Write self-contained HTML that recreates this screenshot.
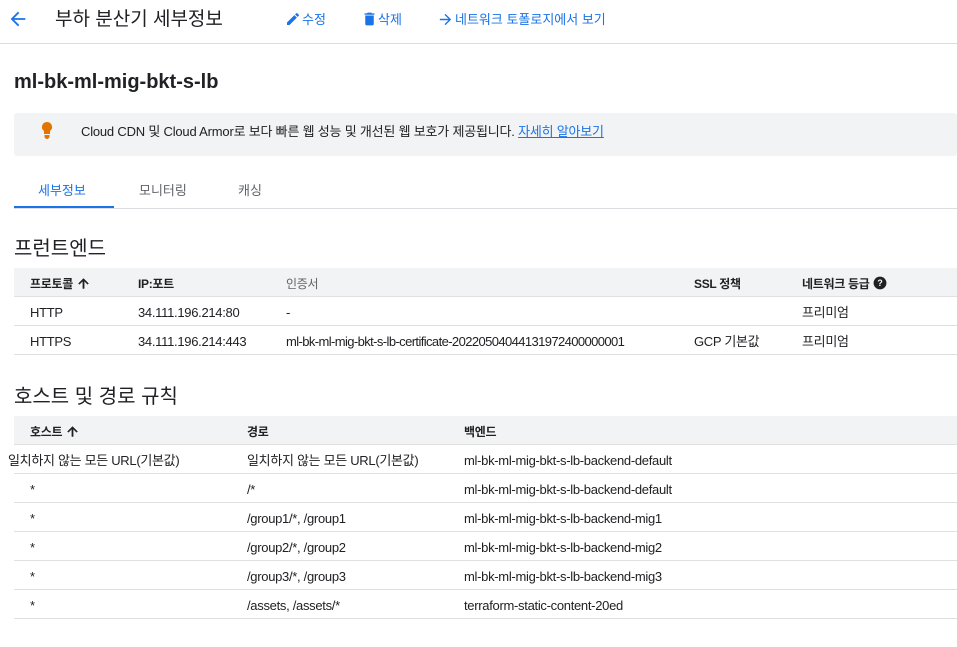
<!DOCTYPE html>
<html><head><meta charset="utf-8"><style>
*{margin:0;padding:0;box-sizing:border-box}
body{width:957px;height:647px;background:#fff;font-family:"Liberation Sans","Noto Sans CJK KR",sans-serif;color:#202124;position:relative;overflow:hidden;font-size:13px}
.a{position:absolute;white-space:nowrap}
.blue{color:#1a73e8}
.hdr{position:absolute;left:0;top:0;width:957px;height:44px;border-bottom:1px solid #dadce0}
.tbl{position:absolute;left:14px;width:943px}
.row{position:relative;height:29px;border-bottom:1px solid #e0e0e0}
.row.h{background:#f1f3f4;font-weight:bold;font-size:12px}
.row span{position:absolute;top:2px;height:28px;line-height:28px;white-space:nowrap;letter-spacing:-0.3px}
.g{color:#5f6368}
</style></head><body>
<div class="hdr"></div>
<svg class="a" style="left:7px;top:8px" width="22" height="22" viewBox="0 0 24 24"><path d="M20 11H7.8l5.6-5.6L12 4l-8 8 8 8 1.4-1.4L7.8 13H20z" fill="#1a73e8"/></svg>
<div class="a" style="left:55px;top:8px;font-size:19px;line-height:24px;color:#202124">부하 분산기 세부정보</div>
<svg class="a" style="left:285px;top:11px" width="16" height="16" viewBox="0 0 24 24"><path d="M3 17.25V21h3.75L17.8 9.94l-3.75-3.75zM20.7 7.04a1 1 0 000-1.41l-2.34-2.34a1 1 0 00-1.41 0l-1.83 1.83 3.75 3.75z" fill="#1a73e8"/></svg>
<div class="a blue" style="left:302px;top:11px;font-size:13px;line-height:18px">수정</div>
<svg class="a" style="left:361px;top:10px" width="17" height="18" viewBox="0 0 24 24"><path d="M6 19c0 1.1.9 2 2 2h8c1.1 0 2-.9 2-2V7H6zM19 4h-3.5l-1-1h-5l-1 1H5v2h14z" fill="#1a73e8"/></svg>
<div class="a blue" style="left:378px;top:11px;font-size:13px;line-height:18px">삭제</div>
<svg class="a" style="left:437px;top:11px" width="17" height="17" viewBox="0 0 24 24"><path d="M12 4l-1.4 1.4 5.6 5.6H4v2h12.2l-5.6 5.6L12 20l8-8z" fill="#1a73e8"/></svg>
<div class="a blue" style="left:455px;top:11px;font-size:13px;line-height:18px">네트워크 토폴로지에서 보기</div>

<div class="a" style="left:14px;top:70px;font-size:20px;font-weight:bold;line-height:24px">ml-bk-ml-mig-bkt-s-lb</div>

<div class="a" style="left:14px;top:113px;width:943px;height:43px;background:#f1f3f4;border-radius:3px"></div>
<svg class="a" style="left:40px;top:121px" width="14" height="18" viewBox="0 0 14 18"><path d="M7 1a5 5 0 00-3 9v3h6v-3a5 5 0 00-3-9zM4.5 14h5v1.5a2 2 0 01-5 0z" fill="#e37400"/></svg>
<div class="a" style="left:81px;top:123px;font-size:13px;line-height:18px;letter-spacing:-0.2px">Cloud CDN 및 Cloud Armor로 보다 빠른 웹 성능 및 개선된 웹 보호가 제공됩니다. <span class="blue" style="text-decoration:underline">자세히 알아보기</span></div>

<div class="a blue" style="left:38px;top:182px;font-size:13px;line-height:18px">세부정보</div>
<div class="a g" style="left:139px;top:182px;font-size:13px;line-height:18px">모니터링</div>
<div class="a g" style="left:238px;top:182px;font-size:13px;line-height:18px">캐싱</div>
<div class="a" style="left:14px;top:208px;width:943px;height:1px;background:#dadce0"></div>
<div class="a" style="left:14px;top:206px;width:100px;height:2px;background:#1a73e8"></div>

<div class="a" style="left:14px;top:236px;font-size:20px;line-height:26px">프런트엔드</div>
<div class="tbl" style="top:268px">
<div class="row h"><span style="left:16px">프로토콜 <svg width="15" height="15" viewBox="0 0 24 24" style="vertical-align:-3px"><path d="M4 12l1.4 1.4L11 7.8V20h2V7.8l5.6 5.6L20 12l-8-8z" fill="#202124" stroke="#202124" stroke-width="0.8"/></svg></span><span style="left:124px">IP:포트</span><span style="left:272px;font-weight:normal" class="g">인증서</span><span style="left:680px">SSL 정책</span><span style="left:788px">네트워크 등급 <svg width="14" height="14" viewBox="0 0 24 24" style="vertical-align:-2px"><circle cx="12" cy="12" r="11" fill="#202124"/><text x="12" y="17" font-size="15" text-anchor="middle" fill="#fff" font-weight="bold" font-family="Liberation Sans">?</text></svg></span></div>
<div class="row"><span style="left:16px">HTTP</span><span style="left:124px">34.111.196.214:80</span><span style="left:272px">-</span><span style="left:788px">프리미엄</span></div>
<div class="row"><span style="left:16px">HTTPS</span><span style="left:124px">34.111.196.214:443</span><span style="left:272px;letter-spacing:-0.6px">ml-bk-ml-mig-bkt-s-lb-certificate-20220504044131972400000001</span><span style="left:680px">GCP 기본값</span><span style="left:788px">프리미엄</span></div>
</div>

<div class="a" style="left:14px;top:384px;font-size:20px;line-height:26px">호스트 및 경로 규칙</div>
<div class="tbl" style="top:416px">
<div class="row h"><span style="left:16px">호스트 <svg width="15" height="15" viewBox="0 0 24 24" style="vertical-align:-3px"><path d="M4 12l1.4 1.4L11 7.8V20h2V7.8l5.6 5.6L20 12l-8-8z" fill="#202124" stroke="#202124" stroke-width="0.8"/></svg></span><span style="left:233px">경로</span><span style="left:450px">백엔드</span></div>
<div class="row"><span style="left:-6px">일치하지 않는 모든 URL(기본값)</span><span style="left:233px">일치하지 않는 모든 URL(기본값)</span><span style="left:450px">ml-bk-ml-mig-bkt-s-lb-backend-default</span></div>
<div class="row"><span style="left:16px">*</span><span style="left:233px">/*</span><span style="left:450px">ml-bk-ml-mig-bkt-s-lb-backend-default</span></div>
<div class="row"><span style="left:16px">*</span><span style="left:233px">/group1/*, /group1</span><span style="left:450px">ml-bk-ml-mig-bkt-s-lb-backend-mig1</span></div>
<div class="row"><span style="left:16px">*</span><span style="left:233px">/group2/*, /group2</span><span style="left:450px">ml-bk-ml-mig-bkt-s-lb-backend-mig2</span></div>
<div class="row"><span style="left:16px">*</span><span style="left:233px">/group3/*, /group3</span><span style="left:450px">ml-bk-ml-mig-bkt-s-lb-backend-mig3</span></div>
<div class="row"><span style="left:16px">*</span><span style="left:233px">/assets, /assets/*</span><span style="left:450px">terraform-static-content-20ed</span></div>
</div>
</body></html>
